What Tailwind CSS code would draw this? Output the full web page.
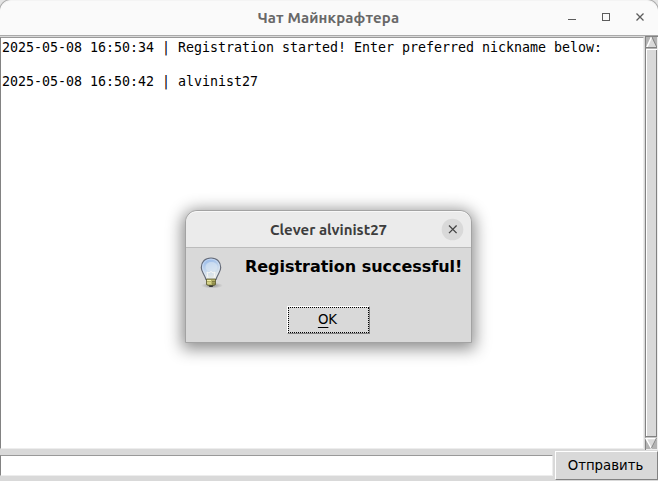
<!DOCTYPE html>
<html lang="ru">
<head>
<meta charset="utf-8">
<title>Чат Майнкрафтера</title>
<script src="https://cdn.jsdelivr.net/npm/@tailwindcss/browser@4"></script>
</head>
<body class="bg-white overflow-hidden">
<main class="relative w-[658px] h-[481px] overflow-hidden bg-[#d9d9d9] flex flex-col font-['DejaVu_Sans',sans-serif] text-black">
  <div class="bg-[#e4e4e4] h-[35px] shrink-0">
    <header class="h-[35px] bg-[#fafafa] rounded-t-[11px] border-t border-x border-t-[#f4f4f4] border-x-[#fafafa] shadow-[0_0_0_1px_#aaa] flex items-center relative">
      <h1 class="w-full text-center pr-[1px] font-['Ubuntu','Noto_Sans',sans-serif] font-bold text-[15px] text-[#686868] whitespace-nowrap tracking-[0.13px]">Чат Майнкрафтера</h1>
      <svg class="absolute -right-px top-0" width="100" height="34" viewBox="0 0 100 34" fill="none" stroke="#5c5c5c">
        <path d="M10 18.500h8"/><rect x="44.500" y="12.500" width="7" height="7"/><path d="M78.500 12.500l7 7m0-7l-7 7" stroke-width="1.300"/>
      </svg>
    </header>
  </div>
  <div class="h-px bg-[#d4d4d4] shrink-0"></div>
  <section class="flex h-[415px] shrink-0">
    <div class="w-[644px] h-[413px] mr-px border-t border-t-[#d9d9d9]">
      <div class="h-[412px] bg-white border border-t-[#999] border-l-[#828282] border-r-[#ededed] border-b-[#ededed] pl-px pt-px font-['DejaVu_Sans_Mono',monospace] text-[13.3px] leading-[17px] tracking-[-0.007px] whitespace-pre"><p>2025-05-08 16:50:34 | Registration started! Enter preferred nickname below:</p><p>&nbsp;</p><p>2025-05-08 16:50:42 | alvinist27</p></div>
    </div>
    <svg width="13" height="414" viewBox="0 0 13 414" fill="none">
      <path fill="#b3b3b3" d="M0 0h13v414H0z"/><path fill="#828282" d="M0 0h13v1H1v413H0z"/>
      <path fill="#d9d9d9" d="M6.500 1L1 12h11z"/><path stroke="#fff" stroke-width="1.500" d="M6.500 1L1.500 12"/><path stroke="#828282" d="M7 1l5 10.500H1"/>
      <path fill="#d9d9d9" d="M1 13h11v388H1z"/><path fill="#fff" d="M1 13h11v1H2v386H1z"/><path fill="#828282" d="M11 14h1v387H1v-1h10z"/>
      <path fill="#d9d9d9" d="M1 402h11l-5 10z"/><path stroke="#fff" stroke-width="1.500" d="M12 402.500H1l5.500 10"/><path stroke="#828282" d="M6.500 412l5-10"/><path fill="#ededed" d="M12 1h1v413H1v-1h11z"/>
    </svg>
  </section>
  <footer class="flex h-[30px] shrink-0">
    <div class="mt-[4px] w-[553px] h-[21px] bg-white border border-t-[#999] border-l-[#828282] border-r-[#ededed] border-b-[#ededed]"></div>
    <button class="ml-[2px] w-[103px] h-[29px] pr-[2px] bg-[#d9d9d9] border border-t-white border-l-white border-b-[#828282] border-r-[#828282] text-[13.3px] whitespace-nowrap">Отправить</button>
  </footer>
  <section role="dialog" class="absolute left-[185px] top-[210px] w-[287px] h-[133px] rounded-t-[12px] border border-[#a3a3a3] bg-[#d9d9d9] shadow-[0_3px_16px_3px_rgba(0,0,0,0.45)] overflow-hidden">
    <div class="h-[37px] bg-[#ebebeb] border-b border-b-[#bcbcbc] border-t border-t-[#f8f8f8] rounded-t-[11px] flex items-center relative">
      <h2 class="w-full text-center pt-px font-['Ubuntu','Noto_Sans',sans-serif] font-bold text-[15px] text-[#3d3d3d] whitespace-nowrap">Clever alvinist27</h2>
      <svg class="absolute right-[7px] top-[6px]" width="23" height="23" viewBox="0 0 23 23"><circle cx="11.500" cy="11.500" r="10.800" fill="#d9d9d9"/><path d="M8 7.500l7.600 7.600m0-7.600l-7.600 7.600" stroke="#444" stroke-width="1.300"/></svg>
    </div>
    <div class="flex pl-[9px] pt-[6px] h-[58px]">
      <svg width="32" height="38" viewBox="0 0 32 38">
        <defs>
          <linearGradient id="g" x1="0" y1="0" x2="0.300" y2="1"><stop stop-color="#8db3e8"/><stop offset=".6" stop-color="#c5d8ee"/><stop offset="1" stop-color="#e5e9e7"/></linearGradient>
          <radialGradient id="s"><stop stop-color="#555" stop-opacity=".65"/><stop offset="1" stop-color="#777" stop-opacity="0"/></radialGradient>
        </defs>
        <ellipse cx="17" cy="31.500" rx="11" ry="3" fill="url(#s)"/>
        <path d="M16 4C10 4 6.300 8 6.300 13.500C6.300 18 9.500 20 11 25.500H21C22.500 20 25.700 18 25.700 13.500C25.700 8 22 4 16 4Z" fill="url(#g)" stroke="#656b78" stroke-width="1.200"/>
        <path d="M16 5.200C11 5.200 7.600 8.500 7.600 13.500C7.600 17.500 10.800 20 12 24.500H20C21.200 20 24.400 17.500 24.400 13.500C24.400 8.500 21 5.200 16 5.200Z" fill="none" stroke="#edf4fc" stroke-width=".6" opacity=".7"/>
        <ellipse cx="16.500" cy="13" rx="6" ry="5" fill="#dce7f3" opacity=".6"/>
        <path d="M13 24l-1-6 2 1 2-1.500 2 1.500 2-1-1 6" stroke="#f8f8f5" fill="none"/>
        <path d="M11.500 25h9v5.500l-2 1h-5l-2-1z" fill="#b7b469" stroke="#56552c" stroke-width=".8"/><path d="M12 26.500h4M12 29h4" stroke="#f0edaa"/><path d="M17 27.800h3.500M17 30h3.500" stroke="#68662f"/><path d="M13.500 31.500h5l-1 1.500h-3z" fill="#353535"/>
      </svg>
      <p class="ml-[18px] pt-[1px] font-bold text-[16px] leading-[23px] tracking-[-0.03px] whitespace-nowrap">Registration successful!</p>
    </div>
    <div class="pl-[101px]">
      <button class="block w-[83px] h-[28px] border border-t-white border-l-white border-r-[#828282] border-b-[#828282]"><span class="block h-[26px] pr-[2px] border border-dotted border-black text-[13.3px] leading-[23px]"><span class="underline underline-offset-[3px] decoration-1">O</span>K</span></button>
    </div>
  </section>
</main>
</body>
</html>
